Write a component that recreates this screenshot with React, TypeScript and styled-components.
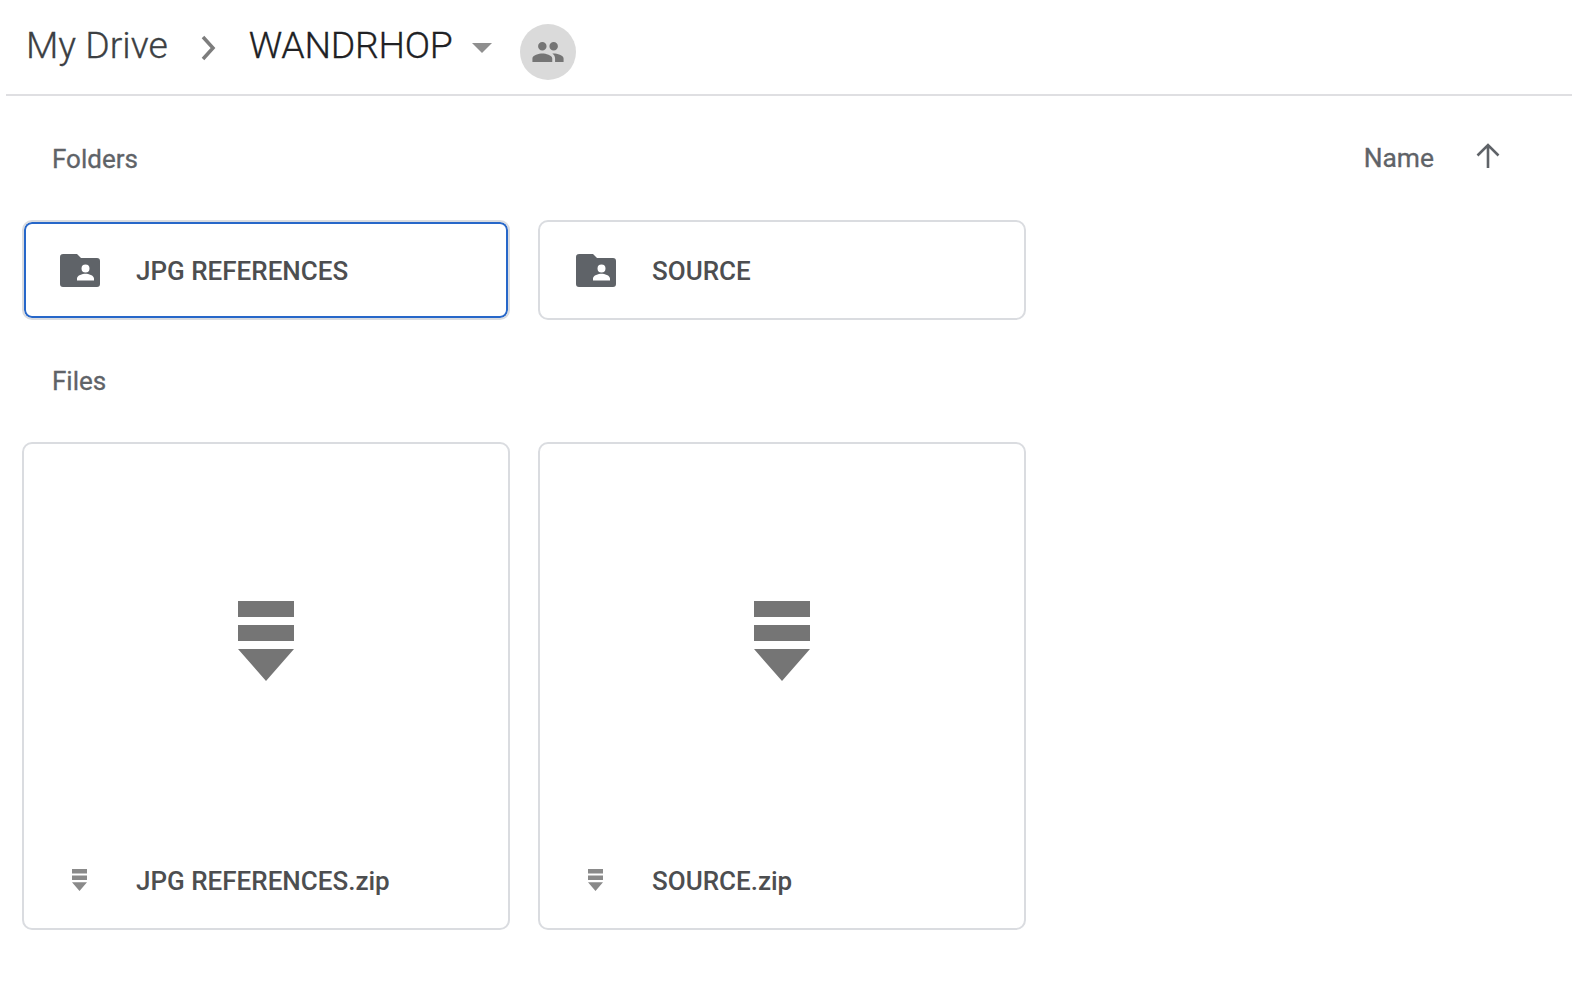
import React from "react";
import styled, { createGlobalStyle } from "styled-components";

const Global = createGlobalStyle`
  html, body { margin: 0; padding: 0; background: #fff; }
  body { font-family: Roboto, "Liberation Sans", sans-serif; }
`;

const Page = styled.div`
  width: 1572px;
  height: 1004px;
  overflow: hidden;
  background: #fff;
`;

const Header = styled.header`
  box-sizing: border-box;
  margin-left: 6px;
  height: 96px;
  border-bottom: 2px solid #dfdfe2;
  display: flex;
  align-items: flex-start;
  padding: 24px 0 0 20px;
`;

const Crumb = styled.span<{ $current?: boolean }>`
  margin-top: -1px;
  font-size: 37.4px;
  line-height: 44px;
  font-weight: 300;
  -webkit-text-stroke: 0.3px currentColor;
  letter-spacing: ${(p) => (p.$current ? "-0.25px" : "0")};
  color: ${(p) => (p.$current ? "#202124" : "#3c4043")};
`;

const Chevron = styled.svg`
  margin: 11px 30px 0 31px;
  flex: none;
`;

const Caret = styled.svg`
  margin: 19px 0 0 19px;
  flex: none;
`;

const SharedBadge = styled.div`
  margin: 0 0 0 28px;
  width: 56px;
  height: 56px;
  border-radius: 50%;
  background: #dadada;
  display: flex;
  align-items: center;
  justify-content: center;
`;

const Content = styled.main`
  padding: 0 0 0 22px;
`;

const SectionHead = styled.div<{ $height: number; $drop?: number; $lift?: number }>`
  box-sizing: border-box;
  height: ${(p) => p.$height}px;
  display: flex;
  justify-content: space-between;
  align-items: center;
  padding: ${(p) => p.$drop ?? 0}px 71px ${(p) => p.$lift ?? 0}px 30px;
`;

const SectionTitle = styled.h2`
  margin: 0;
  font-size: 26px;
  line-height: 32px;
  font-weight: 400;
  -webkit-text-stroke: 0.3px currentColor;
  color: #5f6368;
`;

const Sort = styled.div`
  display: flex;
  align-items: center;
  gap: 41px;
  margin-top: -4px;
`;

const SortLabel = styled.span`
  margin-top: 2px;
  font-size: 26.4px;
  line-height: 32px;
  font-weight: 400;
  -webkit-text-stroke: 0.3px currentColor;
  color: #5f6368;
`;

const SortArrow = styled.svg`
  margin-bottom: 2px;
  flex: none;
`;

const Grid = styled.div`
  display: grid;
  grid-template-columns: repeat(2, 488px);
  gap: 28px;
`;

const FolderCard = styled.div<{ $selected?: boolean }>`
  box-sizing: border-box;
  height: 100px;
  border-radius: 10px;
  display: flex;
  align-items: center;
  padding-left: 36px;
  background: #fff;
  border: 2px solid #dadce0;
  box-shadow: ${(p) => (p.$selected ? "inset 0 0 0 2px #2767c9" : "none")};
`;

const FileCard = styled.div`
  box-sizing: border-box;
  height: 488px;
  border-radius: 10px;
  border: 2px solid #dadce0;
  display: flex;
  flex-direction: column;
  background: #fff;
`;

const Preview = styled.div`
  flex: 1;
  display: flex;
  align-items: center;
  justify-content: center;
  padding-top: 7px;
`;

const Footer = styled.div`
  height: 97px;
  display: flex;
  align-items: center;
  padding-left: 36px;
`;

const IconSlot = styled.div`
  width: 40px;
  display: flex;
  justify-content: center;
  flex: none;
`;

const SmallIconSlot = styled(IconSlot)`
  padding-right: 2px;
  box-sizing: border-box;
`;

const ItemName = styled.span`
  margin: 2px 0 0 36px;
  font-size: 26px;
  line-height: 32px;
  font-weight: 500;
  color: #4d4e50;
`;

const FolderIcon = () => (
  <svg width="40" height="33" viewBox="0 0 40 33">
    <path
      fillRule="evenodd"
      fill="#5f6368"
      d="M3 0h14l4 4h16a3 3 0 0 1 3 3v23a3 3 0 0 1-3 3H3a3 3 0 0 1-3-3V3a3 3 0 0 1 3-3zM29.500 14.500a4 4 0 1 0-8 0a4 4 0 0 0 8 0zM17 26.500h17v-2c0-3.200-5.500-4.800-8.500-4.800s-8.500 1.600-8.500 4.800z"
    />
  </svg>
);

const ArchiveIcon = ({ width, height, fill }: { width: number; height: number; fill: string }) => (
  <svg width={width} height={height} viewBox="0 0 56 80" preserveAspectRatio="none">
    <path fill={fill} d="M0 0h56v16H0zM0 24h56v16H0zM0 48h56L28 80z" />
  </svg>
);

const folders = [
  { name: "JPG REFERENCES", selected: true },
  { name: "SOURCE", selected: false },
];
const files = ["JPG REFERENCES.zip", "SOURCE.zip"];

export default function App() {
  return (
    <Page>
      <Global />
      <Header>
        <Crumb>My Drive</Crumb>
        <Chevron width="20" height="26" viewBox="0 0 20 26">
          <path d="M4 2l10 11L4 24" fill="none" stroke="#7d7d7d" strokeWidth="3.500" />
        </Chevron>
        <Crumb $current>WANDRHOP</Crumb>
        <Caret width="20" height="10" viewBox="0 0 20 10">
          <path d="M0 0h20L10 10z" fill="#8f8f8f" />
        </Caret>
        <SharedBadge>
          <svg width="34" height="34" viewBox="0 0 24 24">
            <path
              fill="#757575"
              d="M16 11c1.660 0 2.990-1.340 2.990-3S17.660 5 16 5s-3 1.340-3 3 1.340 3 3 3zm-8 0c1.660 0 2.990-1.340 2.990-3S9.660 5 8 5 5 6.340 5 8s1.340 3 3 3zm0 2c-2.330 0-7 1.170-7 3.500V19h14v-2.500c0-2.330-4.670-3.500-7-3.500zm8 0c-.290 0-.620.020-.970.050 1.160.840 1.970 1.970 1.970 3.450V19h6v-2.500c0-2.330-4.670-3.500-7-3.500z"
            />
          </svg>
        </SharedBadge>
      </Header>
      <Content>
        <SectionHead $height={124} $drop={2}>
          <SectionTitle>Folders</SectionTitle>
          <Sort>
            <SortLabel>Name</SortLabel>
            <SortArrow width="26" height="26" viewBox="0 0 26 26">
              <path d="M13 25V2M2.500 12.500L13 2l10.500 10.500" fill="none" stroke="#5f6368" strokeWidth="2.600" />
            </SortArrow>
          </Sort>
        </SectionHead>
        <Grid>
          {folders.map((f) => (
            <FolderCard key={f.name} $selected={f.selected}>
              <IconSlot>
                <FolderIcon />
              </IconSlot>
              <ItemName>{f.name}</ItemName>
            </FolderCard>
          ))}
        </Grid>
        <SectionHead $height={122} $lift={1}>
          <SectionTitle>Files</SectionTitle>
        </SectionHead>
        <Grid>
          {files.map((f) => (
            <FileCard key={f}>
              <Preview>
                <ArchiveIcon width={56} height={80} fill="#757575" />
              </Preview>
              <Footer>
                <SmallIconSlot>
                  <ArchiveIcon width={15} height={22} fill="#8a8a8a" />
                </SmallIconSlot>
                <ItemName>{f}</ItemName>
              </Footer>
            </FileCard>
          ))}
        </Grid>
      </Content>
    </Page>
  );
}
